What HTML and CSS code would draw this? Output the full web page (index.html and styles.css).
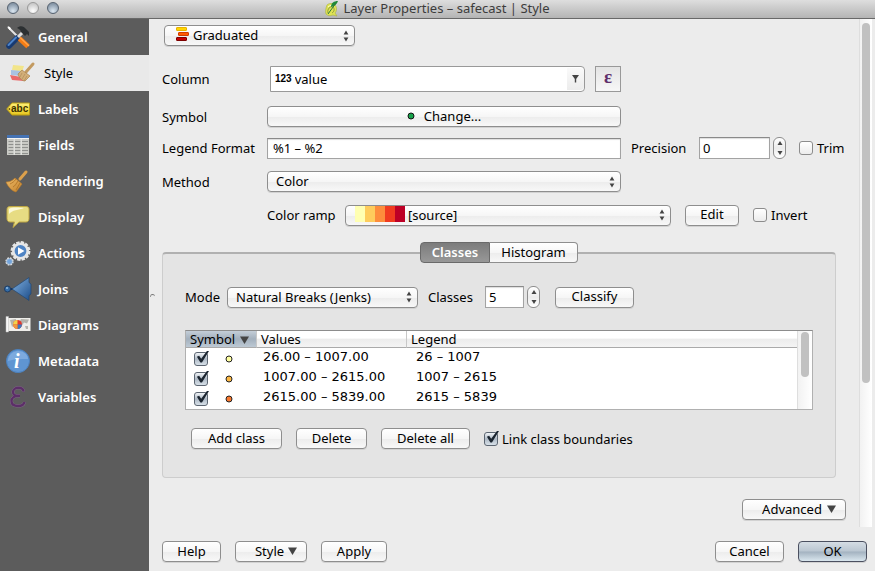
FILE: index.html
```html
<!DOCTYPE html>
<html lang="en">
<head>
<meta charset="utf-8">
<title>Layer Properties – safecast | Style</title>
<link rel="stylesheet" href="styles.css">
</head>
<body>
<svg class="defs" aria-hidden="true">
  <defs>
    <symbol id="updown" viewBox="0 0 6 12"><path d="M3 0.5 5.4 4.6H0.6zM3 11.5 5.4 7.4H0.6z" fill="#444"/></symbol>
    <symbol id="down" viewBox="0 0 9 8"><path d="M0 .5h9L4.5 8z" fill="#444"/></symbol>
    <linearGradient id="blue" x1="0" y1="0" x2="1" y2="1"><stop offset="0" stop-color="#82b2e2"/><stop offset="1" stop-color="#1c4c88"/></linearGradient>
    <linearGradient id="yellow" x1="0" y1="0" x2="0" y2="1"><stop offset="0" stop-color="#fff27a"/><stop offset="1" stop-color="#e6c51c"/></linearGradient>
    <linearGradient id="wood" x1="0" y1="0" x2="1" y2="1"><stop offset="0" stop-color="#f0bd6a"/><stop offset="1" stop-color="#c1802b"/></linearGradient>
  </defs>
</svg>
<div class="window">
  <header class="titlebar">
    <div class="lights">
      <button class="light" aria-label="Close"></button>
      <button class="light light-pale" aria-label="Minimize"></button>
      <button class="light" aria-label="Zoom"></button>
    </div>
    <h1 class="title">
      <svg width="14" height="17" viewBox="0 0 14 17"><path d="M2 5c2-2 6-2 8 0s2 6 0 8l2 3-4-1c-3 1-5 1-7-1-1-3 0-6 1-9z" fill="#dfe455" stroke="#a9b23c" stroke-width=".6"/><path d="M3 13c-1-4 2-7 5-6 2 2 1 5-1 6" stroke="#8f9a3a" fill="none"/><path d="M3 7c2-2 4-2 6-1" stroke="#fbfbd0" fill="none"/><path d="M13 1c-4 0-7 2-7 6 4-1 6-3 7-6z" fill="#1e8a37"/><path d="M11 3 3 14" stroke="#2a7a3a"/></svg>
      <span>Layer Properties – safecast | Style</span>
    </h1>
    <div class="lights-balance"></div>
  </header>

  <div class="body">
    <nav class="sidebar">
      <a class="item" href="#general">
        <svg class="icon" viewBox="0 0 24 24"><path d="M2 2 14 14" stroke="#e4e4e4" stroke-width="2"/><path d="M1.500 1.500 4 2l1 2-1.500 1z" fill="#fff"/><path d="M11 13 3 21" stroke="#173a72" stroke-width="5.500" stroke-linecap="round"/><path d="M10 12.500 2.500 20" stroke="#4d83c8" stroke-width="2" stroke-linecap="round"/><path d="m17 7-5 5" stroke="#ddd" stroke-width="3"/><path d="m13.500 13.500 8.500 8" stroke="#f57c14" stroke-width="5"/><path d="m14 12.500 9 8.500" stroke="#ffa64d" stroke-width="1.200"/><path d="M11 3c3-3 7-2 9 1l3 3v4l-2-2-2 2-4-4c0-2-2-3-4-4z" fill="#2c3032"/></svg>
        <span>General</span>
      </a>
      <a class="item item-active" href="#style" aria-current="page">
        <svg class="icon" viewBox="0 0 24 24"><path d="m3 4 11 1-2 6-10-2z" fill="#f2e58a"/><path d="m1 9 11 1-2 5-9-1z" fill="#a9c2e2"/><path d="m0 14 11 2 3 4-12-1z" fill="#ea6a6a"/><path d="m23 3-7 8" stroke="#c39a60" stroke-width="3" stroke-linecap="round"/><path d="m12 9 8 6-5 5c-3 0-6-3-7-7z" fill="#d2ae78" stroke="#a88350" stroke-width=".7"/><path d="m12 12-2 4M15 13l-3 5M17 15l-3 5" stroke="#b18b57" stroke-width=".7"/></svg>
        <span>Style</span>
      </a>
      <a class="item" href="#labels">
        <svg class="icon" viewBox="0 0 24 24"><path d="M6 6h17.500v12H6L.7 12z" fill="url(#yellow)" stroke="#b99d12"/><circle cx="3.400" cy="12" r=".9" fill="#6e5d12"/><text x="5" y="15" class="abc">abc</text></svg>
        <span>Labels</span>
      </a>
      <a class="item" href="#fields">
        <svg class="icon" viewBox="0 0 24 24"><path d="M1 2h22v20H1z" fill="#c9cac5"/><path d="M1 2h22v3H1z" fill="#4573b4"/><path d="M1 5.500h22" stroke="#f4f4f4"/><path d="M2.500 8.500h5m1.500 0h5.500m1.500 0h6M2.500 11.500h5m1.500 0h5.500m1.500 0h6M2.500 14.500h5m1.500 0h5.500m1.500 0h6M2.500 17.500h5m1.500 0h5.500m1.500 0h6M2.500 20.500h5m1.500 0h5.500m1.500 0h6" stroke="#8f918e"/><path d="M8.200 6v16M15.200 6v16" stroke="#e9e9e6"/></svg>
        <span>Fields</span>
      </a>
      <a class="item" href="#rendering">
        <svg class="icon" viewBox="0 0 24 24"><path d="m20 3-6 7" stroke="#dba04c" stroke-width="3" stroke-linecap="round"/><path d="m9 9 7 6-6 8C6 22 2 18 0 13c3 0 6-1 9-4z" fill="url(#wood)" stroke="#b87926" stroke-width=".6"/><path d="M10 10c-2 3-4 4-6 5m8-3c-2 3-3 5-5 6m7-4-4 7" stroke="#a86a1d" stroke-width=".7" fill="none"/></svg>
        <span>Rendering</span>
      </a>
      <a class="item" href="#display">
        <svg class="icon" viewBox="0 0 24 24"><path d="M4 1.500h16c2 0 3 1 3 3v9c0 2-1 3.500-3 3.500h-7l-6 5.500 1.500-5.500H4c-2 0-3-1.500-3-3.500v-9c0-2 1-3 3-3z" fill="#e7dc83" stroke="#bfa743"/><path d="M3 4c2-2 10-1.500 15-1-5 2-12 2-15 6z" fill="#fbf8d8"/></svg>
        <span>Display</span>
      </a>
      <a class="item" href="#actions">
        <svg class="icon" viewBox="0 0 24 24"><circle cx="14.500" cy="10" r="8.700" fill="none" stroke="#e6e6e6" stroke-width="2.400" stroke-dasharray="3.300 1.255"/><circle cx="14.500" cy="10" r="7.200" fill="#4f84c4" stroke="#e6e6e6" stroke-width="2.600"/><path d="m12 6.300 6.500 3.700-6.500 3.700z" fill="#fff"/><circle cx="3.500" cy="20.500" r="3.300" fill="#72a4dc" stroke="#d9dde1" stroke-width="1.800" stroke-dasharray="1.700 .890"/><circle cx="3.500" cy="20.500" r="2.800" fill="#72a4dc" stroke="#c5cbd2" stroke-width=".6"/></svg>
        <span>Actions</span>
      </a>
      <a class="item" href="#joins">
        <svg class="icon icon-wide" viewBox="0 0 28 24"><path d="M1 12h11" stroke="#17355f" stroke-width="2"/><circle cx="3.500" cy="12" r="3" fill="#346da8" stroke="#1e3c63"/><circle cx="3" cy="11" r="1" fill="#91bde6"/><path d="M8 12 25 .500v5l2 1.500v10l-2 1.500v5z" fill="url(#blue)" stroke="#24466f" stroke-width=".7"/></svg>
        <span>Joins</span>
      </a>
      <a class="item" href="#diagrams">
        <svg class="icon" viewBox="0 0 24 24"><path d="M2 5h22.500v13H2z" fill="#efeeea"/><path d="M0 3.500h2.500V19H0z" fill="#f8f8f8" stroke="#bdbdbd" stroke-width=".5"/><path d="m4 7 6-1-1 5-3 3zM15 6l8 .500-2 4-3-1-2 3-3-3zM19 13h3v3h-2z" fill="#b4b3ac"/><circle cx="11.500" cy="11.500" r="4.500" fill="#e3392c"/><path d="M11.500 11.500V7A4.500 4.500 0 0 0 7 11.500z" fill="#f3d34b"/><path d="M11.500 11.500H16a4.500 4.500 0 0 1-4.500 4.500z" fill="#3f79bd"/><path d="M11.500 11.500V16A4.500 4.500 0 0 1 7 11.500z" fill="#f09a3f"/></svg>
        <span>Diagrams</span>
      </a>
      <a class="item" href="#metadata">
        <svg class="icon" viewBox="0 0 24 24"><circle cx="12" cy="12" r="11.500" fill="#5f95d2" stroke="#4b80bd"/><path d="M2 12C2 6 7 2 12 2s10 3 10 8c-7 0-13 0-20 2z" fill="#7daade"/><text x="8" y="19" class="info">i</text></svg>
        <span>Metadata</span>
      </a>
      <a class="item" href="#variables">
        <svg class="icon" viewBox="0 0 24 24"><path d="M17.500 6.500c0-2.500-2-3.700-5-3.700s-5.500 1.500-5.500 4.200c0 2.200 2 3.800 4.500 3.800H14M13 11h-1.500C8 11 5.500 13 5.500 16c0 3.500 3 5 6.500 5s6-1.500 6.500-4" fill="none" stroke="#8a7490" stroke-width="3"/><path d="M17.500 6.500c0-2.500-2-3.700-5-3.700s-5.500 1.500-5.500 4.200c0 2.200 2 3.800 4.500 3.800H14M13 11h-1.500C8 11 5.500 13 5.500 16c0 3.500 3 5 6.500 5s6-1.500 6.500-4" fill="none" stroke="#5c2f68" stroke-width="2.400"/></svg>
        <span>Variables</span>
      </a>
    </nav>
    <div class="splitter"></div>

    <main class="main">
      <div class="scroll">
        <div class="page">
          <div class="renderer">
            <span class="pick">
              <select class="select select-icon" aria-label="Renderer"><option>Graduated</option></select>
              <svg class="lead lead-grad" width="13" height="14" viewBox="0 0 13 14"><rect x=".5" y=".5" width="10" height="3" rx=".5" fill="#ffd500" stroke="#e8b200"/><rect x="2.500" y="5.500" width="10" height="3" rx=".5" fill="#ff5a00" stroke="#cf3d00"/><rect x=".5" y="10.500" width="10" height="3" rx=".5" fill="#c40000" stroke="#7d0000"/></svg>
              <svg class="arrows" width="6" height="12"><use href="#updown"/></svg>
            </span>
          </div>

          <div class="row row-column">
            <label for="column">Column</label>
            <span class="combo">
              <span class="num">123</span>
              <input id="column" class="combo-input" type="text" value="value">
              <button class="combo-button" aria-label="Show fields"><svg width="7" height="8" viewBox="0 0 7 8"><path d="M0 0h7L4.200 4v3.500H2.800V4z" fill="#444"/></svg></button>
            </span>
            <span><button class="epsilon" aria-label="Expression">ε</button></span>
          </div>

          <div class="row row-symbol">
            <span>Symbol</span>
            <button class="button change"><svg width="8" height="8" viewBox="0 0 8 8"><circle cx="4" cy="4" r="3" fill="#17a34a" stroke="#111"/></svg>Change...</button>
          </div>

          <div class="row row-legend">
            <label for="legend">Legend Format</label>
            <input id="legend" class="text" type="text" value="%1 – %2">
            <span class="side">
              <label class="precision-label" for="precision">Precision</label>
              <input id="precision" class="text number" type="text" value="0">
              <button class="spinner" aria-label="Step precision"><svg width="6" height="14" viewBox="0 0 6 14"><path d="M3 0 5.500 4H.5zM3 14l2.500-4H.5z" fill="#444"/></svg></button>
              <label class="check"><input type="checkbox">Trim</label>
            </span>
          </div>

          <div class="row row-method">
            <label for="method">Method</label>
            <span class="pick">
              <select id="method" class="select"><option>Color</option></select>
              <svg class="arrows" width="6" height="12"><use href="#updown"/></svg>
            </span>
          </div>

          <div class="row row-ramp">
            <span class="ramp">
              <label class="ramp-label" for="ramp">Color ramp</label>
              <span class="pick pick-fill">
                <select id="ramp" class="select select-ramp"><option>[source]</option></select>
                <svg class="lead lead-ramp" width="50" height="16" viewBox="0 0 50 16"><path d="M0 0h10v16H0z" fill="#ffffb2"/><path d="M10 0h10v16H10z" fill="#fecc5c"/><path d="M20 0h10v16H20z" fill="#fd8d3c"/><path d="M30 0h10v16H30z" fill="#f03b20"/><path d="M40 0h10v16H40z" fill="#bd0026"/></svg>
                <svg class="arrows" width="6" height="12"><use href="#updown"/></svg>
              </span>
              <button class="button edit">Edit</button>
              <label class="check invert"><input type="checkbox">Invert</label>
            </span>
          </div>

          <div class="tabs" role="tablist">
            <button class="tab tab-active" role="tab" aria-selected="true">Classes</button>
            <button class="tab" role="tab" aria-selected="false">Histogram</button>
          </div>
          <section class="group">
            <div class="mode-row">
              <label for="mode">Mode</label>
              <span class="pick pick-mode">
                <select id="mode" class="select"><option>Natural Breaks (Jenks)</option></select>
                <svg class="arrows" width="6" height="12"><use href="#updown"/></svg>
              </span>
              <label class="classes-label" for="count">Classes</label>
              <input id="count" class="text count" type="text" value="5">
              <button class="spinner" aria-label="Step classes"><svg width="6" height="14" viewBox="0 0 6 14"><path d="M3 0 5.500 4H.5zM3 14l2.500-4H.5z" fill="#444"/></svg></button>
              <button class="button classify">Classify</button>
            </div>
            <div class="list">
              <table class="table">
                <thead>
                  <tr><th class="sorted">Symbol<svg width="9" height="8"><use href="#down"/></svg></th><th>Values</th><th>Legend</th></tr>
                </thead>
                <tbody>
                  <tr><td><span class="cell"><input type="checkbox" checked aria-label="Show class 1"><svg width="8" height="8" viewBox="0 0 8 8"><circle cx="4" cy="4" r="3" fill="#ffffa0" stroke="#222"/></svg></span></td><td>26.00 – 1007.00</td><td>26 – 1007</td></tr>
                  <tr><td><span class="cell"><input type="checkbox" checked aria-label="Show class 2"><svg width="8" height="8" viewBox="0 0 8 8"><circle cx="4" cy="4" r="3" fill="#fdb945" stroke="#222"/></svg></span></td><td>1007.00 – 2615.00</td><td>1007 – 2615</td></tr>
                  <tr><td><span class="cell"><input type="checkbox" checked aria-label="Show class 3"><svg width="8" height="8" viewBox="0 0 8 8"><circle cx="4" cy="4" r="3" fill="#fa7a30" stroke="#222"/></svg></span></td><td>2615.00 – 5839.00</td><td>2615 – 5839</td></tr>
                </tbody>
              </table>
              <div class="list-track"><div class="list-thumb"></div></div>
            </div>
            <div class="actions">
              <button class="button add">Add class</button>
              <button class="button delete">Delete</button>
              <button class="button delete-all">Delete all</button>
              <label class="check"><input type="checkbox" checked>Link class boundaries</label>
            </div>
          </section>
          <div class="advanced-row">
            <button class="button advanced">Advanced<svg width="9" height="8"><use href="#down"/></svg></button>
          </div>
        </div>
        <div class="track"><div class="thumb"></div></div>
      </div>
      <footer class="footer">
        <button class="button help">Help</button>
        <button class="button style-menu">Style<svg width="9" height="8"><use href="#down"/></svg></button>
        <button class="button apply">Apply</button>
        <span class="spacer"></span>
        <button class="button cancel">Cancel</button>
        <button class="button ok">OK</button>
      </footer>
    </main>
  </div>
</div>
</body>
</html>
```
FILE: styles.css
```css
* {
  box-sizing: border-box;
}

body {
  margin: 0;
  background: #ececec;
  color: #000;
  font: 13px/18px "Noto Sans", "Open Sans", sans-serif;
}

button,
input,
select {
  margin: 0;
  color: inherit;
  font: inherit;
}

button {
  padding: 0;
  border: 0;
}

svg {
  display: block;
  flex: none;
}

.defs {
  position: absolute;
  width: 0;
  height: 0;
}

.window {
  display: flex;
  flex-direction: column;
  min-height: 100vh;
}

/* Title bar */
.titlebar {
  display: flex;
  align-items: center;
  height: 19px;
  padding-bottom: 2px;
  background: linear-gradient(#dedede, #b4b4b4);
  border-bottom: 1px solid #686868;
}

.lights,
.lights-balance {
  display: flex;
  gap: 8px;
  flex: 1;
  padding-left: 7px;
}

.light {
  width: 12px;
  height: 12px;
  border: 1px solid #566270;
  border-radius: 50%;
  background: radial-gradient(circle at 50% 80%, #dbe7f1, #8797a8 75%);
}

.light-pale {
  border-color: #999;
  background: radial-gradient(circle at 50% 80%, #fff, #cbcbcb 75%);
}

.title {
  display: flex;
  align-items: center;
  gap: 4px;
  margin: 0;
  color: #3c3c3c;
  font-size: 13px;
  font-weight: 400;
}

.body {
  display: flex;
  flex: 1;
}

/* Sidebar */
.sidebar {
  flex: none;
  width: 149px;
  background: #5c5c5c;
}

.item {
  display: flex;
  align-items: center;
  gap: 8px;
  height: 36px;
  padding-left: 6px;
  color: #fff;
  font-weight: 600;
  text-decoration: none;
}

.item-active {
  gap: 10px;
  padding-left: 10px;
  background: #e9e9e9;
  color: #000;
  font-weight: 400;
}

.icon {
  width: 24px;
  height: 24px;
  overflow: visible;
}

.icon-wide {
  width: 28px;
  margin: 0 -2px;
}

.abc {
  font: bold 10px "Liberation Sans", sans-serif;
  fill: #3b3100;
}

.info {
  font: italic bold 20px "Liberation Serif", serif;
  fill: #fff;
}

.splitter {
  align-self: center;
  width: 5px;
  height: 3px;
  margin-left: 1px;
  border-top: 1px solid #777;
  border-left: 1px solid #999;
  border-radius: 3px 3px 0 0;
}

/* Main area */
.main {
  display: flex;
  flex: 1;
  flex-direction: column;
  min-width: 0;
}

.scroll {
  display: flex;
  flex: 1;
}

.page {
  flex: 1;
  min-width: 0;
  padding: 6px 13px 7px 7px;
}

.track {
  width: 13px;
  margin-right: 3px;
  padding: 4px 2px;
  border-left: 1px solid #dedede;
  background: linear-gradient(90deg, #f2f2f2, #fff);
}

.thumb {
  height: 72%;
  border-radius: 4px;
  background: #c1c1c1;
}

/* Controls */
.button,
.select {
  height: 21px;
  border: 1px solid #8e8e8e;
  border-radius: 4px;
  background: linear-gradient(#fff, #f6f6f6 50%, #ececec 51%, #f8f8f8);
  box-shadow: 0 1px 0 #d2d2d2;
}

.button {
  display: flex;
  align-items: center;
  justify-content: center;
  flex: none;
  padding-bottom: 2px;
}

.pick {
  display: grid;
  align-items: center;
}

.pick > * {
  grid-area: 1 / 1;
}

.select {
  appearance: none;
  width: 100%;
  padding: 0 20px 3px 8px;
}

.arrows {
  justify-self: end;
  margin-right: 6px;
  pointer-events: none;
}

.lead {
  align-self: start;
  margin-top: 2px;
  pointer-events: none;
}

.lead-grad {
  margin-left: 12px;
}

.select-icon {
  padding-left: 28px;
}

.lead-ramp {
  margin: 1px 0 0 10px;
}

.select-ramp {
  padding-left: 62px;
}

.text {
  width: 100%;
  height: 21px;
  padding: 0 5px;
  border: 1px solid #a3a3a3;
  border-top-color: #8a8a8a;
  background: #fff;
  box-shadow: inset 0 1px 1px #ddd;
}

.number,
.count {
  flex: none;
  width: 71px;
  height: 22px;
  padding: 0 3px;
}

.count {
  width: 39px;
}

.spinner {
  display: grid;
  place-items: center;
  flex: none;
  width: 13px;
  height: 22px;
  margin-left: 3px;
  border: 1px solid #8e8e8e;
  border-radius: 6px;
  background: linear-gradient(#fff, #ececec 50%, #fff);
}

.check {
  display: flex;
  align-items: center;
  gap: 4px;
  white-space: nowrap;
}

input[type="checkbox"] {
  display: grid;
  appearance: none;
  flex: none;
  width: 14px;
  height: 14px;
  border: 1px solid #8c8c8c;
  border-radius: 3px;
  background: linear-gradient(#fff, #ececec);
}

input[type="checkbox"]:checked {
  border-color: #5c6672;
  background: linear-gradient(#f2f5f8, #aeb9c5 50%, #d8e1e9);
}

input[type="checkbox"]:checked::after {
  content: "";
  width: 13px;
  height: 12px;
  margin: -2px 0 0 1px;
  background: #1b2530;
  clip-path: polygon(7% 52%, 24% 44%, 40% 68%, 84% 4%, 100% 4%, 46% 100%, 34% 100%);
}

/* Form rows */
.renderer {
  width: 191px;
  margin-left: 2px;
}

.row {
  display: grid;
  grid-template-columns: 105px minmax(0, 1fr) 225px;
  align-items: center;
}

.row-column {
  grid-template-columns: 105px minmax(0, 1fr) 251px;
  margin-top: 20px;
}

.row-symbol {
  margin-top: 14px;
}

.row-legend {
  margin-top: 10px;
}

.row-method,
.row-ramp {
  margin-top: 12px;
}

.combo {
  display: flex;
  align-items: center;
  height: 26px;
  margin: 0 10px 0 3px;
  padding-left: 4px;
  border: 1px solid #999;
  border-radius: 0 4px 4px 0;
  background: #fff;
}

.num {
  font: bold 10px/18px "Liberation Sans", sans-serif;
}

.combo-input {
  flex: 1;
  min-width: 0;
  padding: 0 3px;
  border: 0;
  background: none;
}

.combo-button {
  display: grid;
  place-items: center;
  width: 17px;
  height: 22px;
  border-radius: 0 4px 4px 0;
  background: linear-gradient(#fafafa, #ececec);
}

.epsilon {
  display: block;
  width: 26px;
  height: 26px;
  padding-bottom: 4px;
  border: 1px solid #999;
  background: linear-gradient(#e4e4e4, #f7f7f7);
  color: #60306c;
  font: bold 19px/20px "Liberation Serif", serif;
}

.change {
  gap: 9px;
}

.side {
  display: flex;
  align-items: center;
  padding-left: 10px;
}

.precision-label {
  flex: 1;
}

.side .check {
  width: 47px;
  margin-left: 13px;
}

.ramp {
  display: flex;
  align-items: center;
  grid-column: 2 / 4;
  height: 22px;
}

.ramp-label {
  width: 78px;
}

.pick-fill {
  flex: 1;
}

.edit {
  width: 54px;
  margin: 0 14px;
}

.invert {
  width: 93px;
}

/* Tabs and group box */
.tabs {
  display: flex;
  justify-content: center;
  position: relative;
  margin: 16px 10px 0 0;
}

.tab {
  width: 88px;
  height: 21px;
  padding-bottom: 2px;
  border: 1px solid #8e8e8e;
  border-left: 0;
  border-radius: 0 4px 4px 0;
  background: linear-gradient(#fff, #f6f6f6 50%, #ececec 51%, #f8f8f8);
}

.tab-active {
  width: 70px;
  border: 1px solid #6a6a6a;
  border-radius: 4px 0 0 4px;
  background: linear-gradient(#7c7c7c, #989898);
  color: #fff;
  font-weight: 600;
}

.group {
  margin: -11px 10px 0 0;
  padding: 32px 22px 28px;
  border: 1px solid #cdcdcd;
  border-top: 2px solid #b0b0b0;
  border-radius: 4px;
  background: #e4e4e4;
}

.mode-row {
  display: flex;
  align-items: center;
}

.mode-row label:first-child {
  width: 34px;
}

.pick-mode {
  width: 191px;
  margin: 0 10px 0 8px;
}

.classes-label {
  width: 57px;
}

.classify {
  width: 79px;
  margin-left: 15px;
}

.list {
  display: flex;
  height: 80px;
  margin-top: 22px;
  border: 1px solid #b0b0b0;
  border-top-color: #8c8c8c;
  background: #fff;
}

.table {
  flex: 1;
  align-self: flex-start;
  width: 100%;
  border-spacing: 0;
  table-layout: fixed;
}

.table th {
  height: 17px;
  padding: 0 4px;
  border-right: 1px solid #c8c8c8;
  border-bottom: 1px solid #aaa;
  background: linear-gradient(#fff 45%, #ececec 50%, #f4f4f4);
  font-weight: 400;
  line-height: 16px;
  text-align: left;
}

.table th:last-child {
  border-right: 0;
}

.table .sorted {
  width: 71px;
  background: linear-gradient(#c4ced8, #a3b0bd 50%, #bdc9d4);
}

.table th:nth-child(2) {
  width: 150px;
}

.sorted svg {
  display: inline-block;
  margin-left: 5px;
}

.table td {
  height: 20px;
  padding: 0 6px 2px;
  font-family: "DejaVu Sans", sans-serif;
  line-height: 18px;
}

.table td:last-child {
  padding-left: 9px;
}

.cell {
  display: flex;
  align-items: center;
  gap: 17px;
  height: 18px;
  padding: 3px 0 0 2px;
}

.list-track {
  width: 15px;
  padding: 1px 3px;
  border-left: 1px solid #dedede;
  background: linear-gradient(90deg, #f2f2f2, #fff);
}

.list-thumb {
  width: 8px;
  height: 45px;
  border-radius: 4px;
  background: #c1c1c1;
}

.actions {
  display: flex;
  align-items: center;
  gap: 14px;
  margin: 18px 0 0 6px;
}

.add {
  width: 91px;
}

.delete {
  width: 71px;
}

.delete-all {
  width: 89px;
}

.advanced-row {
  display: flex;
  justify-content: flex-end;
  margin-top: 21px;
}

.advanced {
  gap: 5px;
  width: 104px;
  padding-left: 10px;
}

/* Footer */
.footer {
  display: flex;
  gap: 14px;
  padding: 14px 8px 9px 7px;
}

.help {
  width: 59px;
}

.style-menu {
  gap: 4px;
  width: 72px;
  padding-left: 10px;
}

.apply {
  width: 66px;
}

.spacer {
  flex: 1;
}

.cancel,
.ok {
  width: 69px;
}

.ok {
  border-color: #4b5060;
  background: linear-gradient(#d5dde4, #bac6d1 48%, #a3b2c0 52%, #d9e6ee);
}
```
